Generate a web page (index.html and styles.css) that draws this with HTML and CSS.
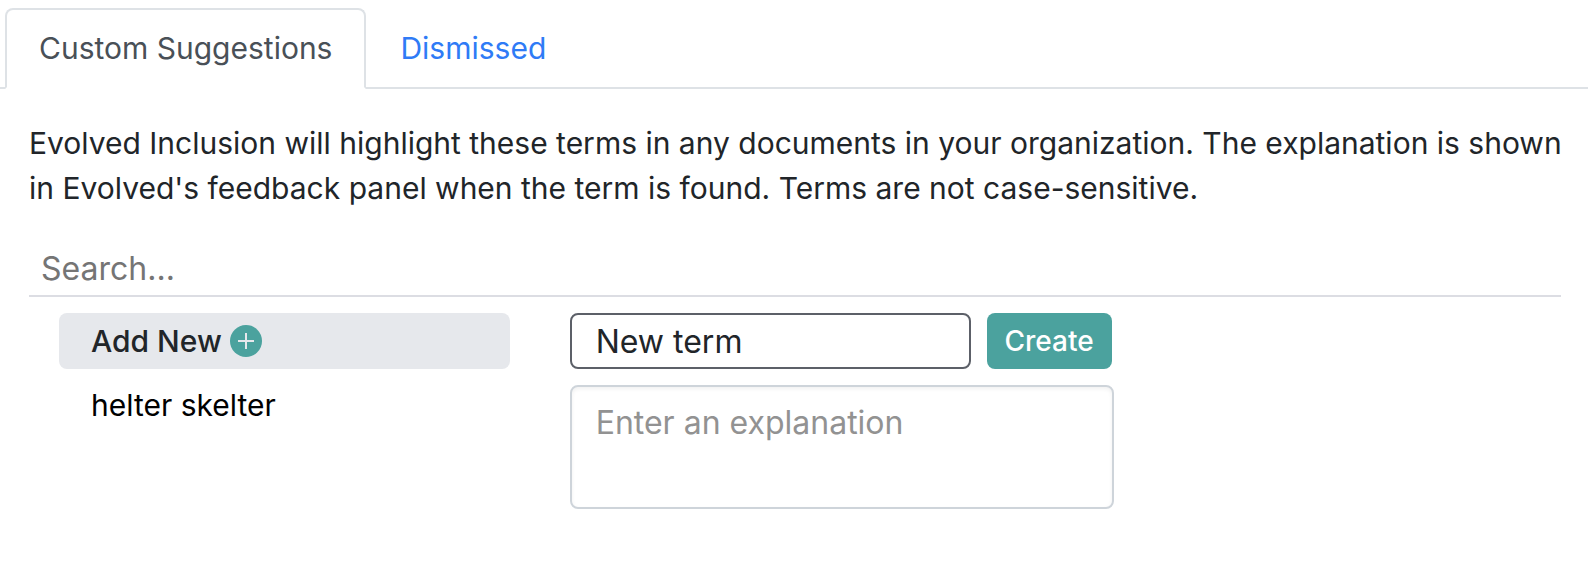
FILE: index.html
```html
<!DOCTYPE html>
<html lang="en">
<head>
  <meta charset="UTF-8">
  <meta name="viewport" content="width=device-width, initial-scale=1.0">
  <title>Custom Suggestions</title>
  <link rel="stylesheet" href="styles.css">
</head>
<body>

<nav class="tabs">
  <a class="tab active" href="#custom">Custom Suggestions</a>
  <a class="tab" href="#dismissed">Dismissed</a>
</nav>

<main class="panel" id="custom">
  <p class="intro">Evolved Inclusion will highlight these terms in any documents in your organization. The explanation is shown in Evolved's feedback panel when the term is found. Terms are not case-sensitive.</p>

  <input type="search" class="search" placeholder="Search..." aria-label="Search terms">

  <div class="columns">
    <div class="terms">
      <button type="button" class="term selected">
        Add New
        <svg class="plus" viewBox="0 0 32 32" aria-hidden="true">
          <circle cx="16" cy="16" r="16" fill="#4ba29e"/>
          <path d="M16 8v16M8 16h16" stroke="#e6e8ec" stroke-width="2"/>
        </svg>
      </button>
      <button type="button" class="term">helter skelter</button>
    </div>

    <form class="editor">
      <div class="editor-row">
        <input type="text" class="term-name" value="New term" aria-label="Term">
        <button type="button" class="create">Create</button>
      </div>
      <textarea class="explanation" placeholder="Enter an explanation" aria-label="Explanation"></textarea>
    </form>
  </div>
</main>

</body>
</html>
```
FILE: styles.css
```css
* {
  box-sizing: border-box;
}

body {
  margin: 0;
  font-family: Inter, "Liberation Sans", sans-serif;
  font-size: 30px;
  line-height: 45px;
  color: #212529;
  background-color: #fff;
}

button, input, textarea {
  font: inherit;
  color: inherit;
  margin: 0;
}

.tabs {
  display: flex;
  padding: 8px 5px 0;
  border-bottom: 2px solid #dee2e6;
}

.tab {
  margin-bottom: -2px; /* cover the line under the tabs */
  padding: 16px 32px;
  border: 2px solid transparent;
  border-radius: 8px 8px 0 0;
  color: #2f7bf6;
  text-decoration: none;
}

.tab.active {
  color: #495057;
  background-color: #fff;
  border-color: #dee2e6 #dee2e6 #fff;
}

.panel {
  padding: 32px 27px 32px 29px;
}

.intro {
  margin: 0 -16px 32px 0;
}

.search {
  display: block;
  width: 100%;
  padding: 2px 12px;
  font-size: 32px;
  line-height: 48px;
  border: none;
  border-bottom: 2px solid #dcdde3;
  outline: none;
  background: none;
  appearance: none;
}

.search::placeholder {
  color: #757575;
  opacity: 1;
}

.columns {
  display: grid;
  grid-template-columns: 1fr 2fr;
  margin-top: 16px;
}

.terms {
  display: flex;
  flex-direction: column;
  gap: 8px;
  padding: 0 30px;
}

.term {
  display: flex;
  align-items: center;
  gap: 8px;
  height: 56px;
  padding: 0 32px;
  border: none;
  border-radius: 8px;
  background: none;
  color: #000;
  cursor: pointer;
}

.term.selected {
  background-color: #e6e8ec;
  color: #212529;
  font-weight: 500;
}

.plus {
  width: 32px;
  height: 32px;
}

.editor {
  display: flex;
  flex-direction: column;
  gap: 16px;
  max-width: 604px;
  padding: 0 30px;
}

.editor-row {
  display: flex;
  gap: 16px;
  padding-right: 2px;
}

.term-name, .explanation {
  min-width: 0;
  padding: 2px 24px;
  font-size: 32px;
  line-height: 48px;
  border: 2px solid #5c6068;
  border-radius: 8px;
  outline: none;
  background-color: #fff;
}

.term-name {
  flex: 1;
  height: 56px;
}

.explanation {
  height: 124px;
  padding-top: 12px;
  border-color: #ced4da;
  box-shadow: inset 0 2px 4px rgba(0, 0, 0, 0.06);
  resize: none;
}

.explanation::placeholder {
  color: #929292;
  opacity: 1;
}

.create {
  padding: 0 18px;
  font-size: 28px;
  font-weight: 500;
  border: none;
  border-radius: 8px;
  background-color: #4ba29e;
  color: #fff;
  cursor: pointer;
}
```
